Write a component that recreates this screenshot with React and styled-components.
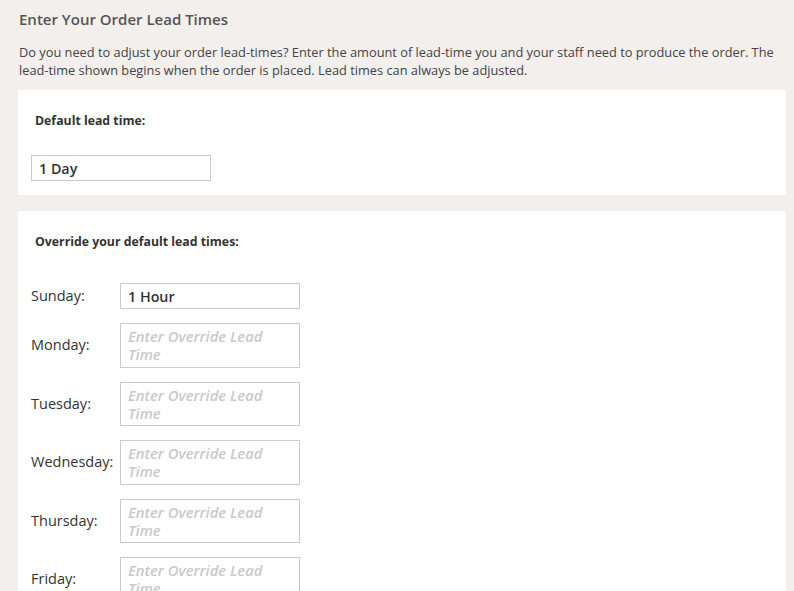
import styled, { createGlobalStyle } from 'styled-components';

const GlobalStyle = createGlobalStyle`
  html, body {
    margin: 0;
    padding: 0;
    background: #f2efec;
    font-family: 'Open Sans', 'Noto Sans', sans-serif;
    color: #333;
  }
`;

const Page = styled.div`
  padding: 9px 8px 40px 18px;
`;

const Title = styled.h1`
  margin: 0 0 0 1px;
  font-size: 15px;
  line-height: 20px;
  font-weight: 600;
  color: #555;
`;

const Intro = styled.p`
  margin: 14px 0 11px 1px;
  font-size: 12.8px;
  line-height: 18px;
  color: #444;
`;

const Card = styled.section`
  background: #fff;
  border-radius: 2px;
  padding: 23px 13px ${({ bottom }) => bottom || 14}px;
  margin-bottom: 16px;
`;

const CardLabel = styled.div`
  margin: 0 0 ${({ gap }) => gap}px 4px;
  font-size: 12.3px;
  line-height: 16px;
  font-weight: 700;
  color: #333;
`;

const fieldBase = `
  box-sizing: border-box;
  width: 180px;
  margin: 0;
  border: 1px solid #cbcbcb;
  border-radius: 0;
  background: #fff;
  font-family: 'Open Sans', 'Noto Sans', sans-serif;
  font-size: 14.3px;
  line-height: 18px;
  font-weight: 600;
  color: #333;
  outline: none;
`;

const TextInput = styled.input`
  ${fieldBase}
  display: block;
  height: 26px;
  padding: 0 7px;
`;

const TextArea = styled.textarea`
  ${fieldBase}
  display: block;
  height: 44.5px;
  padding: 3px 7px;
  font-size: 14.8px;
  resize: none;
  overflow: hidden;

  &::placeholder {
    color: #c9c9c9;
    font-style: italic;
    font-weight: 600;
    opacity: 1;
  }
`;

const DayGrid = styled.div`
  display: grid;
  grid-template-columns: 89px 180px;
  row-gap: 14px;
  align-items: center;
`;

const DayLabel = styled.label`
  font-size: 14.5px;
  line-height: 18px;
  color: #333;
`;

const days = [
  { name: 'Sunday', value: '1 Hour' },
  { name: 'Monday' },
  { name: 'Tuesday' },
  { name: 'Wednesday' },
  { name: 'Thursday' },
  { name: 'Friday' },
  { name: 'Saturday' },
];

const App = () => (
  <>
    <GlobalStyle />
    <Page>
      <Title>Enter Your Order Lead Times</Title>
      <Intro>
        Do you need to adjust your order lead-times? Enter the amount of lead-time you and your staff
        need to produce the order. The lead-time shown begins when the order is placed. Lead times can
        always be adjusted.
      </Intro>
      <Card>
        <CardLabel gap={26}>Default lead time:</CardLabel>
        <TextInput defaultValue="1 Day" />
      </Card>
      <Card bottom={20}>
        <CardLabel gap={33}>Override your default lead times:</CardLabel>
        <DayGrid>
          {days.map((day) => [
            <DayLabel key={day.name + '-label'}>{day.name}:</DayLabel>,
            day.value ? (
              <TextInput key={day.name} defaultValue={day.value} />
            ) : (
              <TextArea key={day.name} placeholder="Enter Override Lead Time" />
            ),
          ])}
        </DayGrid>
      </Card>
    </Page>
  </>
);

export default App;
